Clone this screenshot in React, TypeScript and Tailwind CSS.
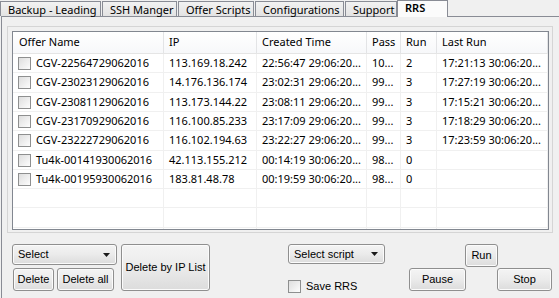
import React from "react";

type Row = {
  name: string;
  ip: string;
  created: string;
  pass: string;
  run: string;
  last: string;
};

const rows: Row[] = [
  { name: "CGV-22564729062016", ip: "113.169.18.242", created: "22:56:47 29:06:20...", pass: "10...", run: "2", last: "17:21:13 30:06:20..." },
  { name: "CGV-23023129062016", ip: "14.176.136.174", created: "23:02:31 29:06:20...", pass: "99...", run: "3", last: "17:27:19 30:06:20..." },
  { name: "CGV-23081129062016", ip: "113.173.144.22", created: "23:08:11 29:06:20...", pass: "99...", run: "3", last: "17:15:21 30:06:20..." },
  { name: "CGV-23170929062016", ip: "116.100.85.233", created: "23:17:09 29:06:20...", pass: "99...", run: "3", last: "17:18:29 30:06:20..." },
  { name: "CGV-23222729062016", ip: "116.102.194.63", created: "23:22:27 29:06:20...", pass: "99...", run: "3", last: "17:23:59 30:06:20..." },
  { name: "Tu4k-00141930062016", ip: "42.113.155.212", created: "00:14:19 30:06:20...", pass: "98...", run: "0", last: "" },
  { name: "Tu4k-00195930062016", ip: "183.81.48.78", created: "00:19:59 30:06:20...", pass: "98...", run: "0", last: "" },
];

const tabs = [
  { label: "Backup - Leading", w: "w-[101px]" },
  { label: "SSH Manger", w: "w-[75px]" },
  { label: "Offer Scripts", w: "w-[76px]" },
  { label: "Configurations", w: "w-[89px]" },
  { label: "Support", w: "w-[52px]" },
];

const cols = ["w-[151px]", "w-[93px]", "w-[110px]", "w-[34px]", "w-[36px]", "w-[111px]"];

const Check = () => (
  <div className="h-[13px] w-[13px] shrink-0 border border-[#8e8f8f] bg-linear-to-br from-[#dedede] to-[#fdfdfd]" />
);

const Button = ({ label, className }: { label: string; className: string }) => (
  <div
    className={
      "flex items-center justify-center rounded-[3px] border border-[#8f8f8f] bg-linear-to-b from-[#f4f4f4] via-[#ebebeb] to-[#dcdcdc] text-[11px] text-black shadow-[inset_0_0_0_1px_#fbfbfb] " +
      className
    }
  >
    {label}
  </div>
);

const Combo = ({ label, className }: { label: string; className: string }) => (
  <div
    className={
      "flex items-center justify-between rounded-[3px] border border-[#8f8f8f] bg-linear-to-b from-[#f4f4f4] via-[#ebebeb] to-[#dcdcdc] pl-[5px] pr-[6px] text-[11px] text-black shadow-[inset_0_0_0_1px_#fbfbfb] " +
      className
    }
  >
    <span>{label}</span>
    <svg width="7" height="4" viewBox="0 0 7 4">
      <path d="M0 0h7L3.5 4z" fill="#1a1a1a" />
    </svg>
  </div>
);

const App: React.FC = () => {
  const blanks = [0, 1, 2];

  return (
    <div className="h-[298px] w-[559px] overflow-hidden bg-[#f0f0f0] font-['Liberation_Sans',Arial,sans-serif]">
      {/* tab strip */}
      <div className="flex h-[16px] items-end font-['Noto_Sans',sans-serif] text-[11px] text-black">
        {tabs.map((t) => (
          <div
            key={t.label}
            className={
              "mr-[1px] flex h-[15px] items-center border border-b-0 border-[#898c95] bg-linear-to-b from-[#f2f2f2] to-[#e3e3e3] pl-[7px] leading-none " +
              t.w
            }
          >
            {t.label}
          </div>
        ))}
        <div className="relative z-10 -ml-[1px] -mb-[1px] flex h-[17px] w-[51px] items-start border border-b-0 border-[#898c95] bg-[#fbfbfb] pl-[7px] pt-[1px] font-semibold leading-none">
          RRS
        </div>
      </div>

      {/* tab page */}
      <div className="ml-[1px] h-[282px] border-l border-t border-[#898c95] bg-[#f0f0f0] pl-[5px] pt-[9px]">
        <div className="h-[207px] w-[546px] border border-[#d5d5d5] pl-[4px] pt-[4px]">
          <div className="h-[199px] w-[537px] overflow-hidden border border-[#828790] bg-white font-['Noto_Sans',sans-serif] text-[11px] text-black">
            <div className="flex h-[22px] border-b border-[#e5e5e5] bg-linear-to-b from-white to-[#f7f8fa]">
              {["Offer Name", "IP", "Created Time", "Pass", "Run", "Last Run"].map((h, i) => (
                <div
                  key={h}
                  className={"flex items-center border-r border-[#e3e4e6] " + (i === 0 ? "pl-[6px] " : "pl-[5px] ") + cols[i]}
                >
                  {h}
                </div>
              ))}
            </div>
            {rows.map((r, i) => (
              <div key={r.name} className={"flex border-b border-[#f0f0f0] " + (i % 3 === 1 ? "h-[20px]" : "h-[19px]")}>
                <div className={"flex items-center gap-[5px] border-r border-[#f0f0f0] pl-[5px] " + cols[0]}>
                  <Check />
                  <span>{r.name}</span>
                </div>
                {[r.ip, r.created, r.pass, r.run, r.last].map((v, j) => (
                  <div key={j} className={"flex items-center border-r border-[#f0f0f0] pl-[5px] " + cols[j + 1]}>
                    {v}
                  </div>
                ))}
              </div>
            ))}
            {blanks.map((b) => (
              <div key={b} className={"flex border-b border-[#f0f0f0] " + (b === 1 ? "h-[20px]" : "h-[19px]")}>
                {cols.map((c, j) => (
                  <div key={j} className={"border-r border-[#f0f0f0] " + c} />
                ))}
              </div>
            ))}
          </div>
        </div>

        {/* bottom controls */}
        <div className="mt-[11px] flex">
          <div className="ml-[5px] flex flex-col">
            <Combo label="Select" className="h-[21px] w-[105px]" />
            <div className="mt-[3px] flex">
              <Button label="Delete" className="ml-[1px] h-[23px] w-[41px]" />
              <Button label="Delete all" className="ml-[3px] h-[23px] w-[57px]" />
            </div>
          </div>
          <Button label="Delete by IP List" className="ml-[4px] h-[47px] w-[89px]" />

          <div className="ml-[78px] flex flex-col">
            <Combo label="Select script" className="h-[20px] w-[97px]" />
            <div className="mt-[14px] flex items-center gap-[5px] text-[11px] text-black">
              <Check />
              <span>Save RRS</span>
            </div>
          </div>

          <div className="ml-[24px] flex flex-col">
            <Button label="Run" className="ml-[56px] h-[23px] w-[33px]" />
            <div className="mt-[1px] flex">
              <Button label="Pause" className="h-[23px] w-[57px]" />
              <Button label="Stop" className="ml-[31px] h-[23px] w-[55px]" />
            </div>
          </div>
        </div>
      </div>
    </div>
  );
};

export default App;
